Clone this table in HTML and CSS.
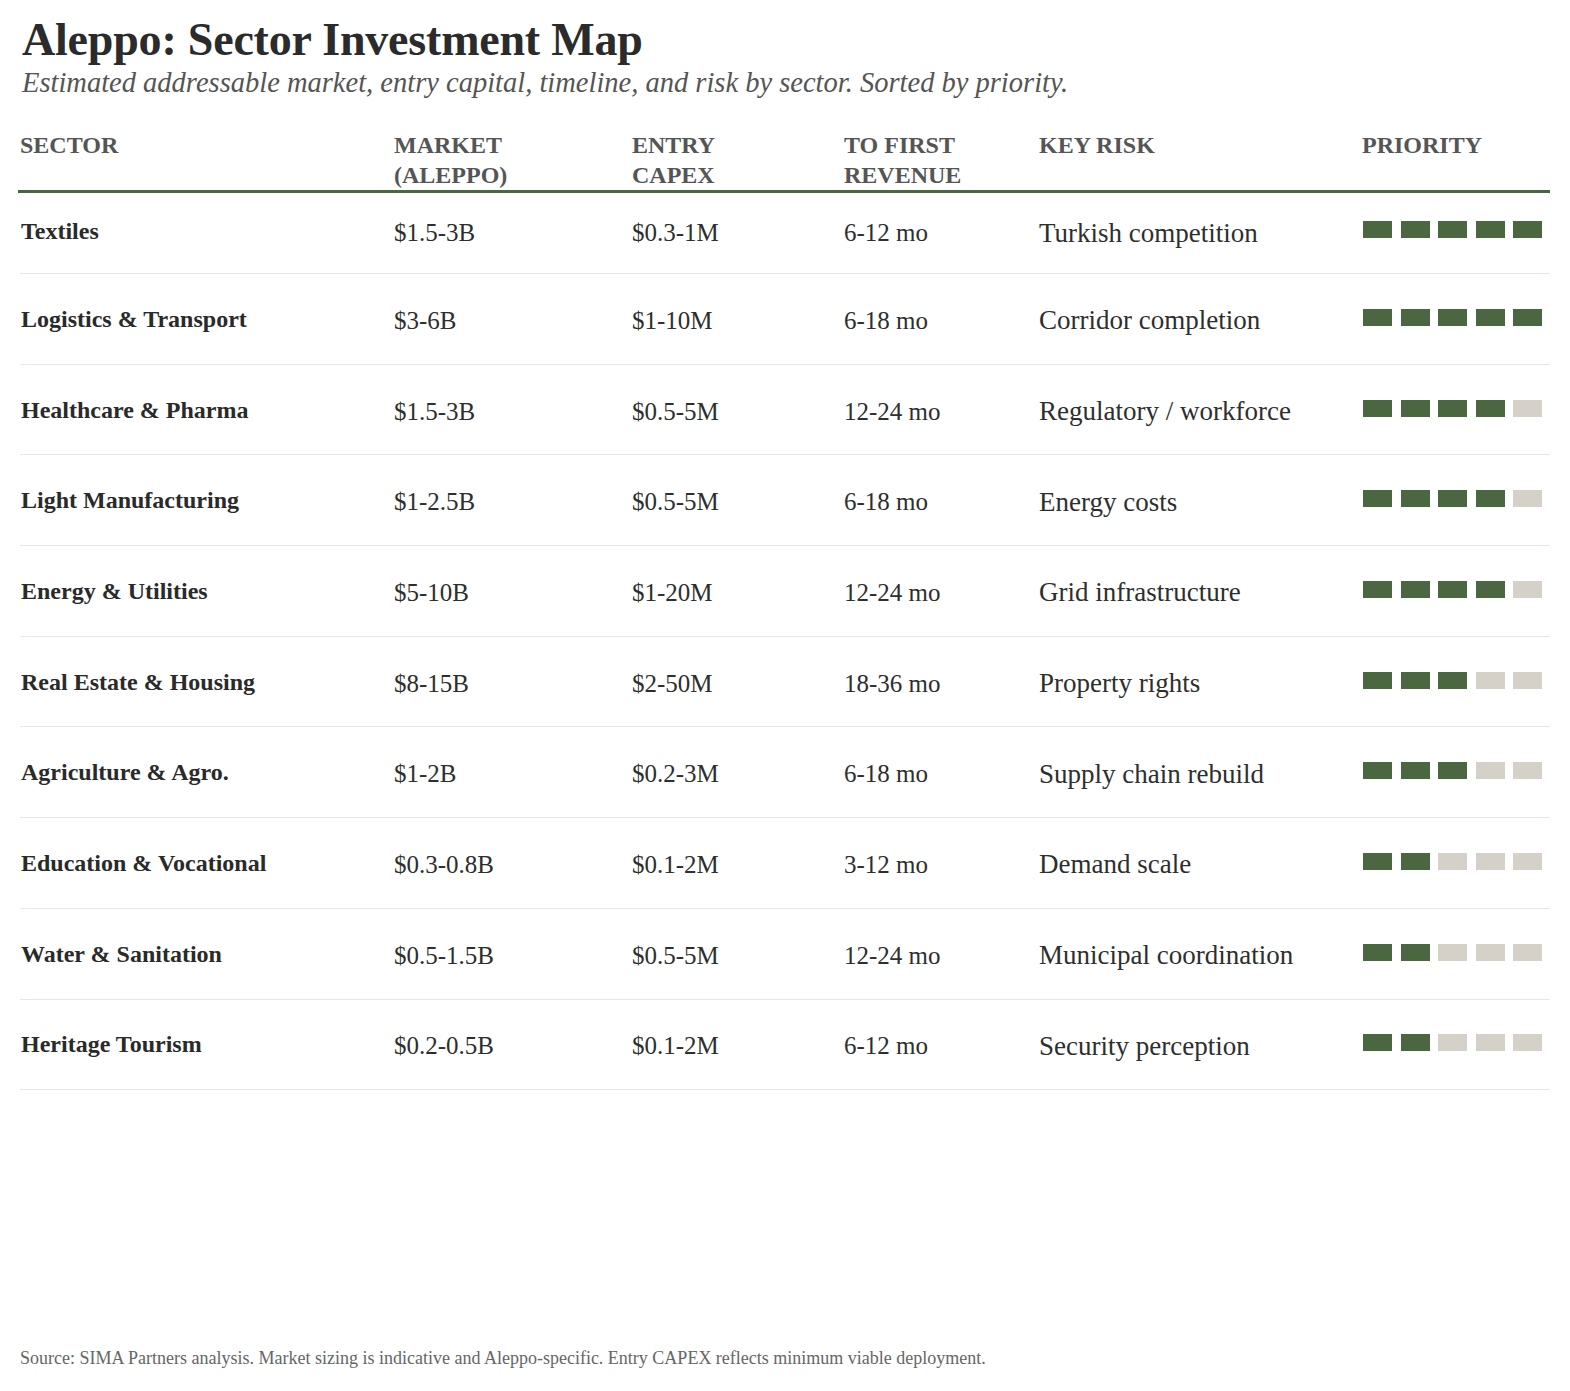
FILE: index.html
```html
<!DOCTYPE html>
<html lang="en">
<head>
<meta charset="utf-8">
<title>Aleppo: Sector Investment Map</title>
<link rel="stylesheet" href="styles.css">
</head>
<body>
<header class="intro">
  <h1 class="title">Aleppo: Sector Investment Map</h1>
  <p class="subtitle">Estimated addressable market, entry capital, timeline, and risk by sector. Sorted by priority.</p>
</header>
<section class="table">
  <div class="head">
    <div>SECTOR</div>
    <div>MARKET<br>(ALEPPO)</div>
    <div>ENTRY<br>CAPEX</div>
    <div>TO FIRST<br>REVENUE</div>
    <div>KEY RISK</div>
    <div>PRIORITY</div>
  </div>
  <div class="row first">
    <div class="sector">Textiles</div>
    <div class="num">$1.5-3B</div>
    <div class="num">$0.3-1M</div>
    <div class="num">6-12 mo</div>
    <div class="risk">Turkish competition</div>
    <div class="bars"><span class="on"></span><span class="on"></span><span class="on"></span><span class="on"></span><span class="on"></span></div>
  </div>
  <div class="row">
    <div class="sector">Logistics &amp; Transport</div>
    <div class="num">$3-6B</div>
    <div class="num">$1-10M</div>
    <div class="num">6-18 mo</div>
    <div class="risk">Corridor completion</div>
    <div class="bars"><span class="on"></span><span class="on"></span><span class="on"></span><span class="on"></span><span class="on"></span></div>
  </div>
  <div class="row">
    <div class="sector">Healthcare &amp; Pharma</div>
    <div class="num">$1.5-3B</div>
    <div class="num">$0.5-5M</div>
    <div class="num">12-24 mo</div>
    <div class="risk">Regulatory / workforce</div>
    <div class="bars"><span class="on"></span><span class="on"></span><span class="on"></span><span class="on"></span><span></span></div>
  </div>
  <div class="row">
    <div class="sector">Light Manufacturing</div>
    <div class="num">$1-2.5B</div>
    <div class="num">$0.5-5M</div>
    <div class="num">6-18 mo</div>
    <div class="risk">Energy costs</div>
    <div class="bars"><span class="on"></span><span class="on"></span><span class="on"></span><span class="on"></span><span></span></div>
  </div>
  <div class="row">
    <div class="sector">Energy &amp; Utilities</div>
    <div class="num">$5-10B</div>
    <div class="num">$1-20M</div>
    <div class="num">12-24 mo</div>
    <div class="risk">Grid infrastructure</div>
    <div class="bars"><span class="on"></span><span class="on"></span><span class="on"></span><span class="on"></span><span></span></div>
  </div>
  <div class="row">
    <div class="sector">Real Estate &amp; Housing</div>
    <div class="num">$8-15B</div>
    <div class="num">$2-50M</div>
    <div class="num">18-36 mo</div>
    <div class="risk">Property rights</div>
    <div class="bars"><span class="on"></span><span class="on"></span><span class="on"></span><span></span><span></span></div>
  </div>
  <div class="row">
    <div class="sector">Agriculture &amp; Agro.</div>
    <div class="num">$1-2B</div>
    <div class="num">$0.2-3M</div>
    <div class="num">6-18 mo</div>
    <div class="risk">Supply chain rebuild</div>
    <div class="bars"><span class="on"></span><span class="on"></span><span class="on"></span><span></span><span></span></div>
  </div>
  <div class="row">
    <div class="sector">Education &amp; Vocational</div>
    <div class="num">$0.3-0.8B</div>
    <div class="num">$0.1-2M</div>
    <div class="num">3-12 mo</div>
    <div class="risk">Demand scale</div>
    <div class="bars"><span class="on"></span><span class="on"></span><span></span><span></span><span></span></div>
  </div>
  <div class="row">
    <div class="sector">Water &amp; Sanitation</div>
    <div class="num">$0.5-1.5B</div>
    <div class="num">$0.5-5M</div>
    <div class="num">12-24 mo</div>
    <div class="risk">Municipal coordination</div>
    <div class="bars"><span class="on"></span><span class="on"></span><span></span><span></span><span></span></div>
  </div>
  <div class="row">
    <div class="sector">Heritage Tourism</div>
    <div class="num">$0.2-0.5B</div>
    <div class="num">$0.1-2M</div>
    <div class="num">6-12 mo</div>
    <div class="risk">Security perception</div>
    <div class="bars"><span class="on"></span><span class="on"></span><span></span><span></span><span></span></div>
  </div>
</section>
<footer class="source">Source: SIMA Partners analysis. Market sizing is indicative and Aleppo-specific. Entry CAPEX reflects minimum viable deployment.</footer>
</body>
</html>
```

FILE: styles.css
```css
* {
  box-sizing: border-box;
}

html, body {
  margin: 0;
  background: #ffffff;
}

body {
  min-height: 100vh;
  padding: 14px 20px 21px 20px;
  display: flex;
  flex-direction: column;
  font-family: "Liberation Serif", "DejaVu Serif", serif;
  color: #2a2a2a;
}

.intro {
  padding-left: 2px;
}

.title {
  margin: 0;
  font-size: 46px;
  line-height: 51px;
  font-weight: 700;
  color: #2b2b2b;
  letter-spacing: -0.2px;
}

.subtitle {
  margin: 2px 0 0 0;
  font-size: 28.5px;
  line-height: 32px;
  font-style: italic;
  color: #555555;
}

.table {
  margin-top: 31px;
}

.head,
.row {
  display: grid;
  grid-template-columns: 374px 238px 212px 195px 323px 1fr;
}

.head {
  font-size: 24px;
  line-height: 30px;
  font-weight: 700;
  color: #555555;
  border-bottom: 3px solid #4a6741;
  margin-left: -2px;
  padding-left: 2px;
}

.row {
  height: 90.7px;
  align-items: center;
  border-bottom: 1px solid #ece6dc;
}

.row.first {
  height: 81px;
  padding-top: 2px;
  padding-bottom: 6px;
}

.sector {
  font-size: 24px;
  font-weight: 700;
  color: #2a2a2a;
  padding-left: 1px;
  margin-top: 1px;
}

.num {
  font-size: 25px;
  color: #2e2e2e;
  margin-top: 4px;
}

.risk {
  font-size: 27px;
  color: #2e2e2e;
  margin-top: 4px;
}

.bars {
  display: flex;
  gap: 8.5px;
  padding-left: 1px;
  margin-top: -3px;
}

.bars span {
  display: block;
  width: 29px;
  height: 17px;
  background: #d6d1c8;
}

.bars span.on {
  background: #4a6741;
}

.source {
  margin-top: auto;
  font-size: 18px;
  line-height: 24px;
  color: #666666;
}
```
